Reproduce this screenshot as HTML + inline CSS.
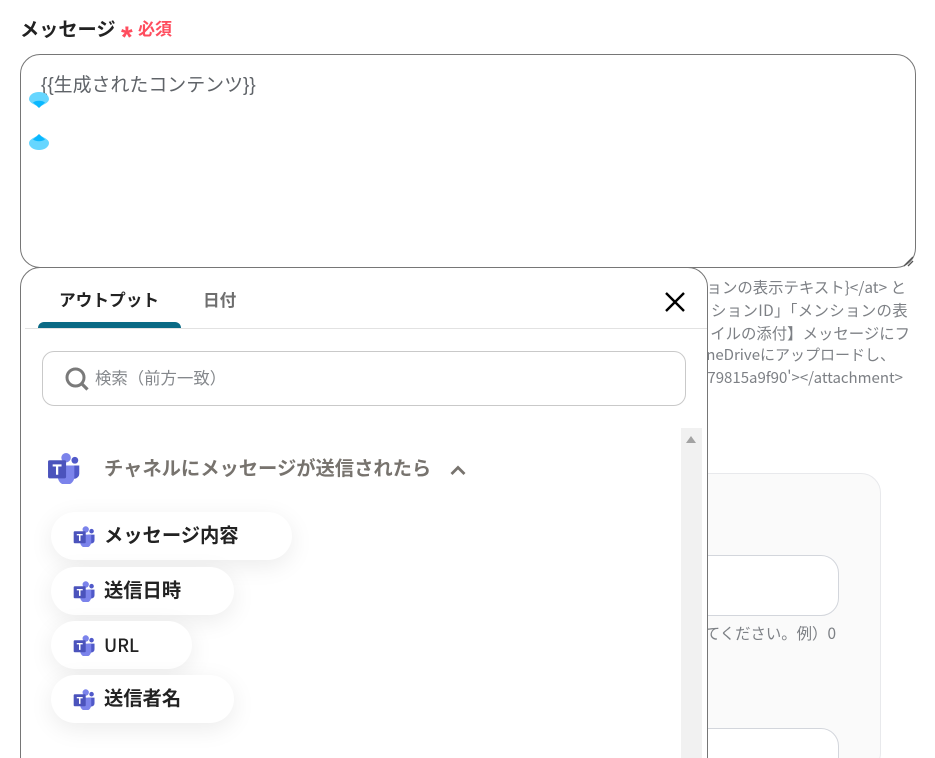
<!DOCTYPE html>
<html lang="ja">
<head>
<meta charset="utf-8">
<style>
html,body{margin:0;padding:0;background:#fff;width:935px;height:758px;overflow:hidden}
#w{position:absolute;left:0;top:0;width:935px;height:758px;overflow:hidden;font-family:"Liberation Sans","Noto Sans CJK JP",sans-serif;color:#222}
.a{position:absolute;white-space:nowrap}
.help{font-family:"Noto Sans CJK JP",sans-serif;font-size:15.400px;line-height:20px;color:#7d8085}
.pill{position:absolute;left:51px;height:48px;border-radius:24px;background:#fff;box-shadow:0 6px 24px rgba(0,0,0,.08);font-weight:700;font-size:19.300px;line-height:48px;color:#222}
.pill svg{position:absolute;left:22px;top:13px;width:22px;height:22px}
.pill span{position:absolute;left:53px;top:1px;white-space:nowrap}
</style>
</head>
<body>
<div id="w">
<svg width="0" height="0" style="position:absolute">
<defs>
<symbol id="teams" viewBox="0 0 32 32">
<circle cx="27" cy="9" r="3.300" fill="#5059c9"/>
<path d="M22 14h9.300v8a5 5 0 0 1-9.300 2.500z" fill="#5059c9"/>
<circle cx="18.500" cy="6.500" r="4.600" fill="#7b83eb"/>
<path d="M10 14h16.500v10.500a8 8 0 0 1-16 1z" fill="#7b83eb"/>
<rect x="1" y="9" width="17.500" height="17.500" rx="1.500" fill="#4b53bc"/>
<path d="M5.500 13h8.600v2h-3.200v8H8.700v-8H5.500z" fill="#fff"/>
</symbol>
</defs>
</svg>

<div class="a" style="left:20px;top:17px;font-size:19.200px;line-height:28px;font-weight:700;color:#222">メッセージ</div>
<div class="a" style="left:121px;top:24px;font-size:30px;line-height:28px;font-weight:700;color:#ff4d5e">*</div>
<div class="a" style="left:138px;top:18px;font-size:17px;line-height:24px;font-weight:700;color:#ff4d5e">必須</div>

<div class="a" style="left:20px;top:54px;width:894px;height:212px;border:1px solid #767676;border-radius:20px;background:#fff"></div>
<div class="a" style="left:41px;top:73px;font-size:18.950px;line-height:26px;color:#5f6368">{{生成されたコンテンツ}}</div>

<svg class="a" style="left:29px;top:92px" width="20" height="16" viewBox="0 0 20 16">
<path d="M0 7a10 7 0 0 1 20 0c0 3-4 5-7 6.500h-6C4 12 0 10 0 7z" fill="#66d6ff"/>
<path d="M4 10.500a8 5 0 0 1 12 0L10 16z" fill="#0ab8ff"/>
</svg>
<svg class="a" style="left:29px;top:134px" width="20" height="16" viewBox="0 0 20 16">
<path d="M0 9a10 7 0 0 0 20 0c0-3-4-5-7-6.500H7C4 4 0 6 0 9z" fill="#66d6ff"/>
<path d="M4 5.500a8 5 0 0 0 12 0L10 0z" fill="#0ab8ff"/>
</svg>

<svg class="a" style="left:901px;top:254px" width="14" height="14" viewBox="0 0 14 14">
<path d="M3 12L12 3M7 12l5-5" stroke="#555" stroke-width="1.300" fill="none"/>
</svg>

<div class="a help" style="right:29px;top:277px">ョンの表示テキスト}&lt;/at&gt; と</div>
<div class="a help" style="right:27px;top:300px;letter-spacing:.35px">ションID」「メンションの表</div>
<div class="a help" style="right:25px;top:323px">イルの添付】メッセージにフ</div>
<div class="a help" style="right:40px;top:345px;font-size:15px">OneDriveにアップロードし、</div>
<div class="a help" style="right:32px;top:368px;font-size:15px">79815a9f90'&gt;&lt;/attachment&gt;</div>

<div class="a" style="left:600px;top:473px;width:281px;height:300px;box-sizing:border-box;border:1px solid #e8e9ec;border-radius:20px;background:#fafafa"></div>
<div class="a" style="left:600px;top:555px;width:239px;height:61px;box-sizing:border-box;border:1px solid #d3d6dc;border-radius:18px;background:#fff"></div>
<div class="a help" style="right:99px;top:623px">てください。例）0</div>
<div class="a" style="left:600px;top:728px;width:239px;height:61px;box-sizing:border-box;border:1px solid #d3d6dc;border-radius:18px;background:#fff"></div>

<div class="a" style="left:20px;top:267px;width:688px;height:520px;box-sizing:border-box;border:1px solid #767676;border-radius:20px;background:#fff"></div>

<div class="a" style="left:59px;top:288px;font-size:16.700px;line-height:26px;font-weight:700;color:#222">アウトプット</div>
<div class="a" style="left:203px;top:288px;font-size:16.700px;line-height:26px;font-weight:700;color:#6e6e6e">日付</div>
<div class="a" style="left:38px;top:322px;width:143px;height:6px;background:#0a6a85;border-radius:6px 6px 0 0"></div>
<div class="a" style="left:25px;top:328px;width:682px;height:1px;background:#e2e2e2"></div>

<svg class="a" style="left:664px;top:291px" width="22" height="22" viewBox="0 0 22 22">
<path d="M2 2l18 18M20 2L2 20" stroke="#000" stroke-width="2.400" fill="none"/>
</svg>

<div class="a" style="left:42px;top:351px;width:644px;height:55px;box-sizing:border-box;border:1px solid #c9c9c9;border-radius:12px;background:#fff"></div>
<svg class="a" style="left:65px;top:367px" width="24" height="24" viewBox="0 0 24 24">
<circle cx="10.500" cy="10.500" r="8.500" stroke="#7a7a7a" stroke-width="3" fill="none"/>
<path d="M16.500 16.500l6 6" stroke="#7a7a7a" stroke-width="3.200" fill="none"/>
</svg>
<div class="a" style="left:95px;top:367px;font-size:16.400px;line-height:25px;color:#85888c">検索（前方一致）</div>

<div class="a" style="left:681px;top:428px;width:21px;height:330px;background:#f1f1f1"></div>
<svg class="a" style="left:686px;top:436px" width="10" height="7" viewBox="0 0 10 7"><path d="M5 0l5 7H0z" fill="#a3a3a3"/></svg>

<svg class="a" style="left:47px;top:451px" width="33" height="33"><use href="#teams"/></svg>
<div class="a" style="left:104px;top:456px;font-size:19.300px;line-height:28px;font-weight:700;color:#77736e">チャネルにメッセージが送信されたら</div>
<svg class="a" style="left:449px;top:464px" width="18" height="12" viewBox="0 0 18 12"><path d="M2.500 10L9 3.500 15.500 10" stroke="#77736e" stroke-width="2.800" fill="none"/></svg>

<div class="pill" style="top:512px;width:241px"><svg><use href="#teams"/></svg><span>メッセージ内容</span></div>
<div class="pill" style="top:567px;width:183px"><svg><use href="#teams"/></svg><span>送信日時</span></div>
<div class="pill" style="top:621px;width:141px"><svg><use href="#teams"/></svg><span style="top:0;font-family:'Noto Sans CJK JP',sans-serif;font-size:18px;font-weight:500">URL</span></div>
<div class="pill" style="top:675px;width:183px"><svg><use href="#teams"/></svg><span>送信者名</span></div>
</div>
</body>
</html>
